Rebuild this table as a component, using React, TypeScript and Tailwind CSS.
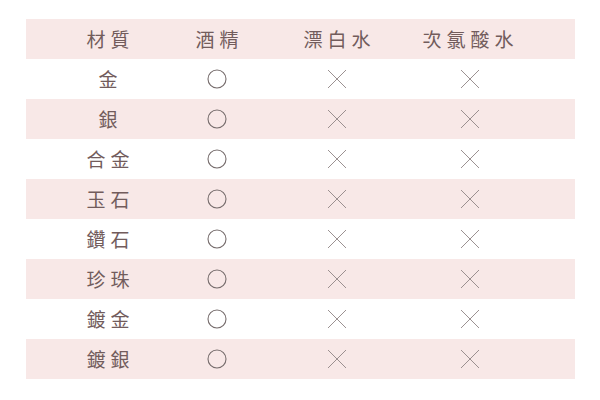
import React from 'react';

const rows = ['金', '銀', '合金', '玉石', '鑽石', '珍珠', '鍍金', '鍍銀'];

function Circle() {
    return (
        <svg width="20" height="20" viewBox="0 0 20 20">
            <circle cx="10" cy="10" r="9" fill="none" stroke="#766c6c" strokeWidth="1.1" />
        </svg>
    );
}

function Cross() {
    return (
        <svg width="20" height="20" viewBox="0 0 20 20">
            <path d="M1 1 L19 19 M19 1 L1 19" stroke="#908585" strokeWidth="0.9" />
        </svg>
    );
}

export default function App() {
    const cols = 'grid grid-cols-[164px_54px_186px_76px_1fr] h-10 items-center';
    const cell = 'flex justify-center whitespace-nowrap pl-[5px]';
    return (
        <div
            className="w-[600px] h-[400px] bg-white pt-[19px] pl-[26px] text-[#725c5c]"
            style={{ fontFamily: '"Noto Sans CJK TC", "Noto Sans CJK JP", serif' }}
        >
            <div className="w-[549px]">
                {/* Header */}
                <div className={`${cols} bg-[#f8e8e7] text-[19px] tracking-[5px]`}>
                    <div className={cell}>材質</div>
                    <div className={cell}>酒精</div>
                    <div className={cell}>漂白水</div>
                    <div className={cell}>次氯酸水</div>
                    <div />
                </div>
                {rows.map((name, i) => (
                    <div key={name} className={`${cols} ${i % 2 === 1 ? 'bg-[#f8e8e7]' : 'bg-white'}`}>
                        <div className={`${cell} text-[19px] tracking-[5px]`}>{name}</div>
                        <div className="flex justify-center"><Circle /></div>
                        <div className="flex justify-center"><Cross /></div>
                        <div className="flex justify-center pl-[4px]"><Cross /></div>
                        <div />
                    </div>
                ))}
            </div>
        </div>
    );
}
